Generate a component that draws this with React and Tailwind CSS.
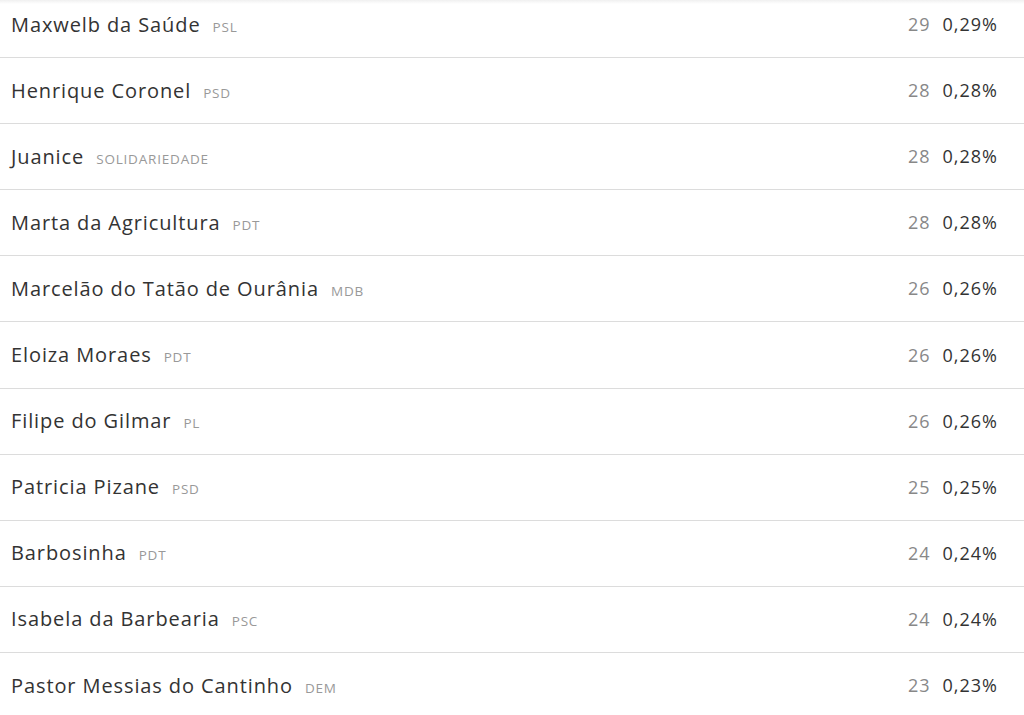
const rows = [
  { name: 'Maxwelb da Saúde', party: 'PSL', votes: 29, pct: '0,29%' },
  { name: 'Henrique Coronel', party: 'PSD', votes: 28, pct: '0,28%' },
  { name: 'Juanice', party: 'SOLIDARIEDADE', votes: 28, pct: '0,28%' },
  { name: 'Marta da Agricultura', party: 'PDT', votes: 28, pct: '0,28%' },
  { name: 'Marcelão do Tatão de Ourânia', party: 'MDB', votes: 26, pct: '0,26%' },
  { name: 'Eloiza Moraes', party: 'PDT', votes: 26, pct: '0,26%' },
  { name: 'Filipe do Gilmar', party: 'PL', votes: 26, pct: '0,26%' },
  { name: 'Patricia Pizane', party: 'PSD', votes: 25, pct: '0,25%' },
  { name: 'Barbosinha', party: 'PDT', votes: 24, pct: '0,24%' },
  { name: 'Isabela da Barbearia', party: 'PSC', votes: 24, pct: '0,24%' },
  { name: 'Pastor Messias do Cantinho', party: 'DEM', votes: 23, pct: '0,23%' },
];

export default function App() {
  return (
    <div className="relative h-[715px] overflow-hidden bg-white font-['Open_Sans',sans-serif] text-[#333]">
      {/* faint top shadow */}
      <div className="absolute inset-x-0 top-0 h-[4px] bg-gradient-to-b from-[#f0f0f0] to-white" />
      <ul className="-mt-[8px]">
        {rows.map((r, i) => (
          <li
            key={r.name}
            className={`flex h-[66.1px] items-center pl-[11px] pr-[26px] ${i < rows.length - 1 ? 'border-b border-[#dcdcdc]' : ''}`}
          >
            <div className="flex items-baseline">
              <span className="text-[20px] tracking-[0.9px]">{r.name}</span>
              <span className="ml-[12px] text-[13.5px] tracking-[0.8px] uppercase text-[#999]">{r.party}</span>
            </div>
            <span className="ml-auto text-[18px] tracking-[1px] text-[#888]">{r.votes}</span>
            <span className="ml-[12px] text-right text-[18px] tracking-[1px] text-[#333]">{r.pct}</span>
          </li>
        ))}
      </ul>
    </div>
  );
}
